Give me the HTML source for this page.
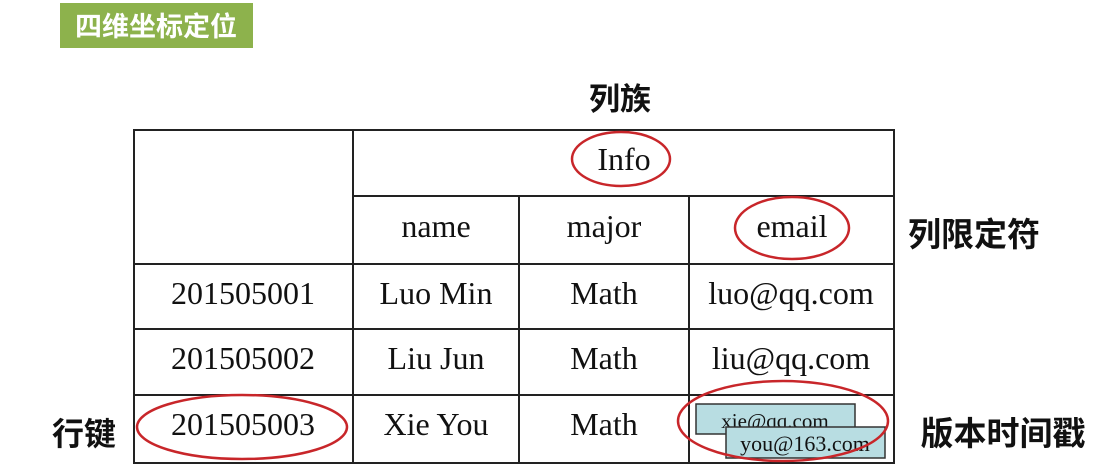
<!DOCTYPE html>
<html><head><meta charset="utf-8"><style>
html,body{margin:0;padding:0;background:#fff;width:1106px;height:464px;overflow:hidden}
svg{display:block}
.t{font-family:"Liberation Serif",serif;font-size:32px;fill:#111;text-anchor:middle}
.c{font-family:"Liberation Sans","Noto Sans CJK SC",sans-serif;font-weight:bold;fill:#111}
</style></head><body>
<svg width="1106" height="464" viewBox="0 0 1106 464">
<rect x="60" y="3" width="193" height="45" fill="#8db24c"/>
<text x="156" y="36" class="c" style="fill:#fff;font-size:27px" text-anchor="middle">四维坐标定位</text>
<text x="620" y="110" class="c" style="font-size:31px" text-anchor="middle">列族</text>
<text x="974" y="246" class="c" style="font-size:33px" text-anchor="middle">列限定符</text>
<text x="84" y="445" class="c" style="font-size:32px" text-anchor="middle">行键</text>
<text x="1003" y="445" class="c" style="font-size:33px" text-anchor="middle">版本时间戳</text>
<g stroke="#222" stroke-width="2" fill="none">
<rect x="134" y="130" width="760" height="333"/>
<line x1="353" y1="130" x2="353" y2="463"/>
<line x1="353" y1="196" x2="894" y2="196"/>
<line x1="134" y1="264" x2="894" y2="264"/>
<line x1="134" y1="329" x2="894" y2="329"/>
<line x1="134" y1="395" x2="894" y2="395"/>
<line x1="519" y1="196" x2="519" y2="463"/>
<line x1="689" y1="196" x2="689" y2="463"/>
</g>
<text x="624" y="170" class="t">Info</text>
<text x="436" y="237" class="t">name</text>
<text x="604" y="237" class="t">major</text>
<text x="792" y="237" class="t">email</text>
<text x="243" y="304" class="t">201505001</text>
<text x="436" y="304" class="t">Luo Min</text>
<text x="604" y="304" class="t">Math</text>
<text x="791" y="304" class="t">luo@qq.com</text>
<text x="243" y="369" class="t">201505002</text>
<text x="436" y="369" class="t">Liu Jun</text>
<text x="604" y="369" class="t">Math</text>
<text x="791" y="369" class="t">liu@qq.com</text>
<text x="243" y="435" class="t">201505003</text>
<text x="436" y="435" class="t">Xie You</text>
<text x="604" y="435" class="t">Math</text>
<rect x="696" y="404" width="159" height="30" fill="#b8dde2" stroke="#333" stroke-width="1.5"/>
<text x="775" y="428" class="t" style="font-size:21px">xie@qq.com</text>
<rect x="726" y="427" width="159" height="31" fill="#b8dde2" stroke="#333" stroke-width="1.5"/>
<text x="805" y="451" class="t" style="font-size:22px">you@163.com</text>
<g stroke="#c8262a" stroke-width="2.5" fill="none">
<ellipse cx="621" cy="159" rx="49" ry="27"/>
<ellipse cx="792" cy="228" rx="57" ry="31"/>
<ellipse cx="242" cy="427" rx="105" ry="32"/>
<ellipse cx="783" cy="421" rx="105" ry="40"/>
</g>
</svg>
</body></html>
